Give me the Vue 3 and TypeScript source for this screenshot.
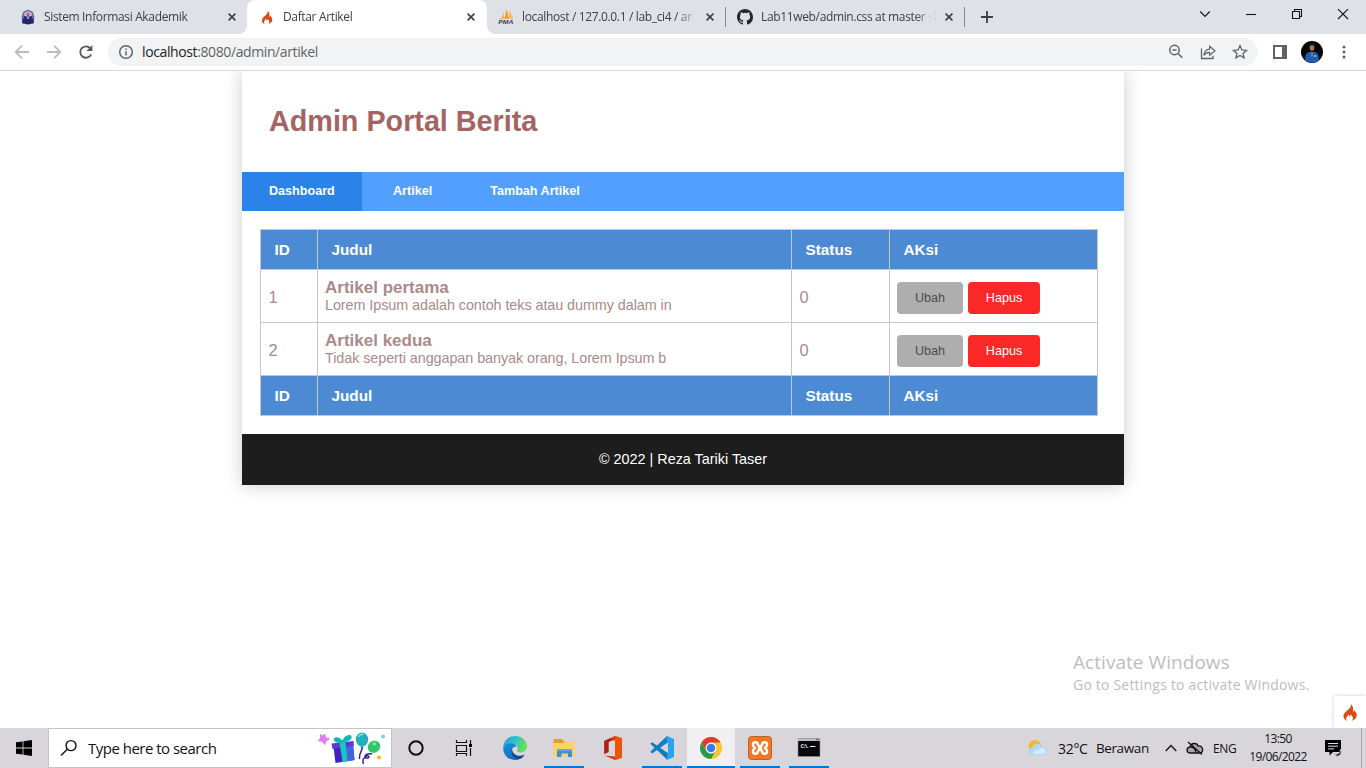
<script setup lang="ts">
interface Tab {
  title: string
  icon: 'campus' | 'flame' | 'pma' | 'github'
  active?: boolean
  divider?: boolean
}
interface Article {
  id: number
  title: string
  excerpt: string
  status: number
}

const tabs: Tab[] = [
  { title: 'Sistem Informasi Akademik', icon: 'campus' },
  { title: 'Daftar Artikel', icon: 'flame', active: true },
  { title: 'localhost / 127.0.0.1 / lab_ci4 / ar', icon: 'pma', divider: true },
  { title: 'Lab11web/admin.css at master · l', icon: 'github', divider: true },
]
const columns: string[] = ['ID', 'Judul', 'Status', 'AKsi']
const articles: Article[] = [
  { id: 1, title: 'Artikel pertama', excerpt: 'Lorem Ipsum adalah contoh teks atau dummy dalam in', status: 0 },
  { id: 2, title: 'Artikel kedua', excerpt: 'Tidak seperti anggapan banyak orang, Lorem Ipsum b', status: 0 },
]
const flame =
  'M8.6 0.5C9.3 2.4 8.4 3.7 6.8 5.2C4.6 7.2 2.2 8.8 2.2 11.4C2.2 13.3 3.6 14.9 5.6 15.5C4.6 14.6 4.3 13.5 4.9 12.4C5.4 11.5 6.3 10.9 6.2 9.6C7.1 10 7.5 10.8 7.3 11.7C8.1 11.3 8.3 10.4 8.1 9.7C9.5 10.6 10.9 11.7 10.7 13.3C10.6 14.2 10.1 14.9 9.4 15.5C11.9 14.9 14 13 14 10.5C14 8.2 12.5 6.9 11.7 6C11.6 6.8 11.3 7.3 10.7 7.5C11 4.8 10.9 2.2 8.6 0.5Z'
</script>

<template>
  <div class="screen">
    <div class="tabstrip">
      <div v-for="tab in tabs" :key="tab.title" class="tab" :class="{ active: tab.active, divider: tab.divider }">
        <svg v-if="tab.icon === 'campus'" class="favicon" viewBox="0 0 16 16">
          <path d="M8 0.5L12.8 2.7L14.5 8L13.5 12H2.5L1.5 8L3.2 2.7Z" fill="#6b6fab" />
          <path d="M8 2L11.6 4L12.7 8L11.4 11H4.6L3.3 8L4.4 4Z" fill="#b4b8da" />
          <path d="M8 3.2L9.3 5.2L8.6 8H7.4L6.7 5.2Z" fill="#e0453c" />
          <path d="M3.5 6.5L7.2 7.8V11H3.5ZM12.5 6.5L8.8 7.8V11H12.5Z" fill="#292f78" />
          <path d="M2.4 10H13.6L14 14.2L8 15.5L2 14.2Z" fill="#22276b" />
        </svg>
        <svg v-else-if="tab.icon === 'flame'" class="favicon" viewBox="-1 -1.5 18 18">
          <path :d="flame" fill="#dd4814" />
        </svg>
        <svg v-else-if="tab.icon === 'pma'" class="favicon" viewBox="0 0 16 16">
          <path d="M5.7 1.5C5.8 5 4.2 8 1.4 10.5L6.2 9.6Z" fill="#f9b05c" />
          <path d="M7.8 0C8.2 3.5 7.6 7 6.2 10L11 9.5C10.5 6 9.6 2.5 7.8 0Z" fill="#f89c0e" />
          <path d="M11 1.8C11.3 4.5 11.5 7 11.2 9.7L15.4 10C14.5 7 13 4 11 1.8Z" fill="#fbb461" />
          <text class="pma" x="0.2" y="15.4" textLength="15.3" lengthAdjust="spacingAndGlyphs">PMA</text>
        </svg>
        <svg v-else class="favicon" viewBox="0 0 16 16">
          <path fill="#24292f" d="M8 0C3.58 0 0 3.58 0 8c0 3.54 2.29 6.53 5.47 7.59.4.07.55-.17.55-.38 0-.19-.01-.82-.01-1.49-2.01.37-2.53-.49-2.69-.94-.09-.23-.48-.94-.82-1.13-.28-.15-.68-.52-.01-.53.63-.01 1.08.58 1.23.82.72 1.21 1.87.87 2.33.66.07-.52.28-.87.51-1.07-1.78-.2-3.64-.89-3.64-3.95 0-.87.31-1.59.82-2.15-.08-.2-.36-1.02.08-2.12 0 0 .67-.21 2.2.82a7.6 7.6 0 0 1 4 0c1.53-1.04 2.2-.82 2.2-.82.44 1.1.16 1.92.08 2.12.51.56.82 1.27.82 2.15 0 3.07-1.87 3.75-3.65 3.95.29.25.54.73.54 1.48 0 1.07-.01 1.93-.01 2.2 0 .21.15.46.55.38A8.01 8.01 0 0 0 16 8c0-4.42-3.58-8-8-8Z" />
        </svg>
        <span class="tab-title">{{ tab.title }}</span>
        <svg class="tab-close" viewBox="0 0 8 8"><path d="M0.6 0.6L7.4 7.4M7.4 0.6L0.6 7.4" /></svg>
      </div>
      <svg class="new-tab" viewBox="0 0 12 12"><path d="M6 0V12M0 6H12" /></svg>
      <div class="window-buttons">
        <svg viewBox="0 0 46 28"><path d="M18.2 11.5L23 16.5L27.8 11.5" /></svg>
        <svg viewBox="0 0 46 28"><path d="M18 14.5H28" /></svg>
        <svg viewBox="0 0 46 28"><path d="M18.5 11.5H25.5V18.5H18.5ZM20.5 11.5V9.5H27.5V16.5H25.5" /></svg>
        <svg viewBox="0 0 46 28"><path d="M18 9.2L28 19M28 9.2L18 19" /></svg>
      </div>
    </div>

    <div class="toolbar">
      <svg class="nav-icon" viewBox="0 0 16 16"><path d="M15 8H2M8 1.7L1.7 8L8 14.3" stroke="#babcbe" /></svg>
      <svg class="nav-icon" viewBox="0 0 16 16"><path d="M1 8H14M8 1.7L14.3 8L8 14.3" stroke="#babcbe" /></svg>
      <svg class="nav-icon" viewBox="0 0 16 16">
        <path d="M13.2 10.3A5.7 5.7 0 1 1 12.2 4.2" stroke="#55585c" stroke-width="2" />
        <path class="solid" d="M14.4 1V7H8.4Z" />
      </svg>
      <div class="omnibox">
        <svg class="info" viewBox="0 0 16 16">
          <circle cx="8" cy="8" r="6.3" /><path d="M8 7.2V11.4M8 4.4V6" />
        </svg>
        <span class="url"><b>localhost</b>:8080/admin/artikel</span>
        <svg class="omni-icon" viewBox="0 0 16 16"><circle cx="6.5" cy="6" r="4.7" /><path d="M10 9.5L14.3 13.8M4.4 6H8.6" /></svg>
        <svg class="omni-icon" viewBox="0 0 16 16">
          <path d="M1.5 4.5V14.5H13V11.8" stroke-width="1.3" />
          <path d="M3.8 11.3C4.3 7.8 6.4 5.5 9.6 5.2V2.2L15 6.8L9.6 11.2V8.3C7.2 8.3 5.3 9.2 3.8 11.3Z" stroke-width="1.2" />
        </svg>
        <svg class="omni-icon" viewBox="0 0 16 16"><path d="M8 1.7L9.9 6L14.5 6.4L11 9.4L12.1 13.9L8 11.5L3.9 13.9L5 9.4L1.5 6.4L6.1 6Z" stroke-width="1.3" /></svg>
      </div>
      <svg class="side-panel" viewBox="0 0 14 14"><path d="M1 1H13V13H1Z" fill="#fff" stroke="#5f6368" stroke-width="2" /><path d="M9 0H14V14H9Z" fill="#5f6368" /></svg>
      <svg class="avatar" viewBox="0 0 22 22">
        <circle cx="11" cy="11" r="11" fill="#050606" />
        <path d="M4.2 19.5C3.8 15 4.7 11.8 8 10.9H14C17.3 11.8 18.2 15 17.8 19.5A11 11 0 0 1 4.2 19.5Z" fill="#1b5cb5" />
        <ellipse cx="11" cy="6.5" rx="2.3" ry="3.3" fill="#a37b52" />
        <path d="M8.3 5.4C8.4 1.8 13.6 1.8 13.7 5.4C12 4.2 10 4.2 8.3 5.4Z" fill="#3a2a1c" />
        <path d="M10 10L11 12L12 10V15.5H10Z" fill="#8d7565" />
        <path d="M13 15H15.3" stroke="#dae5f2" />
      </svg>
      <svg class="kebab" viewBox="0 0 4 16"><circle cx="2" cy="3" r="1.5" /><circle cx="2" cy="8" r="1.5" /><circle cx="2" cy="13" r="1.5" /></svg>
    </div>

    <div class="viewport">
      <div class="container">
        <header><h1>Admin Portal Berita</h1></header>
        <nav>
          <a class="current">Dashboard</a>
          <a>Artikel</a>
          <a>Tambah Artikel</a>
        </nav>
        <main>
          <table>
            <colgroup><col class="c-id" /><col class="c-title" /><col class="c-status" /><col class="c-action" /></colgroup>
            <thead>
              <tr><th v-for="c in columns" :key="c">{{ c }}</th></tr>
            </thead>
            <tbody>
              <tr v-for="a in articles" :key="a.id">
                <td class="num">{{ a.id }}</td>
                <td><strong>{{ a.title }}</strong><p>{{ a.excerpt }}</p></td>
                <td class="num">{{ a.status }}</td>
                <td>
                  <div class="actions"><a class="btn">Ubah</a><a class="btn danger">Hapus</a></div>
                </td>
              </tr>
            </tbody>
            <tfoot>
              <tr><th v-for="c in columns" :key="c">{{ c }}</th></tr>
            </tfoot>
          </table>
        </main>
        <footer>© 2022 | Reza Tariki Taser</footer>
      </div>
      <div class="watermark">
        <div class="wm-title">Activate Windows</div>
        <div class="wm-text">Go to Settings to activate Windows.</div>
      </div>
      <div class="debug-toggle"><svg viewBox="0 0 16 16"><path :d="flame" fill="#dd4814" /></svg></div>
    </div>

    <div class="taskbar">
      <div class="start">
        <svg viewBox="0 0 16 16"><path d="M0 2.3L6.6 1.4V7.5H0ZM7.4 1.3L16 0V7.5H7.4ZM0 8.4H6.6V14.6L0 13.7ZM7.4 8.4H16V16L7.4 14.8Z" /></svg>
      </div>
      <div class="search">
        <svg class="lens" viewBox="0 0 18 18"><circle cx="11" cy="6.6" r="5" /><path d="M7.3 10.3L1 16.5" /></svg>
        <span>Type here to search</span>
        <svg class="party" viewBox="0 0 70 34">
          <path d="M7.5 3L8.6 6.6L12.3 8L9 9.8L7.8 13.6L5.2 10.3L1.2 9.8L3.8 7L3.2 3.6L6.2 5.2Z" fill="#e57af4" stroke="#e57af4" stroke-linejoin="round" />
          <path d="M16.5 16L36 13.500L37.5 29L18.500 32Z" fill="#4420c4" />
          <path d="M27 15L36 13.500L37.5 29L29 30.500Z" fill="#3f65df" />
          <path d="M14.500 12.500L36.500 10L37 15L15.500 18Z" fill="#5a3bd8" />
          <path d="M22.500 11.700L28.500 11L30.500 30.200L25.500 31Z" fill="#18c6c2" />
          <path d="M25.500 11.500C20 13 15.500 10 17 7.500C19 4.500 23.500 7 25.500 9.500C27 5.500 31 3 34 4.500C36.500 7.500 32 11 25.500 11.500Z" fill="#13b5b5" />
          <path d="M45 16C46 20 42 20 42.500 28M55 23C51 22 46 24 49 27C53 28 53 23 48 26C44 30 47 31 46 33" fill="none" stroke="#38208f" stroke-width="1.500" />
          <ellipse cx="45" cy="8.500" rx="6.200" ry="7" fill="#25aebd" />
          <path d="M45 14.500L43.300 17H46.700Z" fill="#158b9c" />
          <path d="M41.500 6C42.500 4 44.500 3 46.500 3.400" stroke="#80e1e5" stroke-width="1.500" fill="none" />
          <ellipse cx="57" cy="15.800" rx="6.600" ry="5.800" transform="rotate(-35 57 15.800)" fill="#2fc76b" />
          <circle cx="57.500" cy="13" r="1.700" fill="#7be69a" />
          <circle cx="66" cy="5.500" r="2" fill="#6cd6e5" /><circle cx="62" cy="26.500" r="2" fill="#fdb515" />
        </svg>
      </div>
      <div class="apps">
        <div class="app"><svg viewBox="0 0 24 24"><circle cx="12" cy="12" r="6.7" fill="none" stroke="#111" stroke-width="2" /></svg></div>
        <div class="app taskview"><svg viewBox="0 0 24 24"><path d="M4.500 4V6.500H14.500V4M4.500 9.500H14.500V15.500H4.500ZM4.500 20V17.500H14.500V20M18.500 4V8M18.500 12V20" fill="none" stroke="#111" stroke-width="1.200" /><path d="M17 8H20V11H17Z" /></svg></div>
        <div class="app edge">
          <svg viewBox="0 0 24 24">
            <defs>
              <linearGradient id="edgeTop" x1="0" y1="0" x2="1" y2="0.300"><stop offset="0" stop-color="#239fd6" /><stop offset="0.500" stop-color="#2cbfd2" /><stop offset="1" stop-color="#66e052" /></linearGradient>
              <linearGradient id="edgeSwirl" x1="0" y1="0" x2="0.600" y2="1"><stop offset="0" stop-color="#1b8fd9" /><stop offset="1" stop-color="#1269bd" /></linearGradient>
            </defs>
            <path d="M0.300 11C0.800 5 5.500 0 12 0C19 0 24 5 24 10.300C24 14.300 21 16.500 17.500 16.500C14.500 16.500 13.300 15.300 14.200 14C15.500 12 14.500 8.700 10.700 8C6 7 2 8.500 0.300 11Z" fill="url(#edgeTop)" />
            <path d="M0.200 11.800C1.500 8 6 6.500 9.800 7.600C12 8.200 13.500 9.700 13.400 11C11 10 9 12 9 14.500C9 19 14 22 20 19.500L21.600 18.600C19 22.500 15.500 24 12 24C5 24 0 18.500 0.200 11.800Z" fill="url(#edgeSwirl)" />
            <path d="M9 13C7.500 17 10.500 23.300 15 23.500C18 22.700 20.500 21 21.700 18.700C16 21.500 9.500 19 9 13Z" fill="#12498b" />
          </svg>
        </div>
        <div class="app open explorer">
          <svg viewBox="0 0 24 24">
            <path d="M1.500 3H9.500L11.500 5H22V10H1.500Z" fill="#dda121" /><path d="M1.500 7H11L13 5H22.500V20.500H1.500Z" fill="#fbd462" />
            <path d="M5 13H20V21H16V17.500H9.500V21H5Z" fill="#3c91d5" /><path d="M5 13H20V15H5Z" fill="#59aae5" />
          </svg>
        </div>
        <div class="app office">
          <svg viewBox="0 0 24 24">
            <path d="M14 0L21 2.200V21.800L14 24L3.500 19.500L14 20.500V4L7.500 5.800V16L3.300 18V5Z" fill="#d53b0a" />
            <path d="M14 0L21 2.200V21.800L14 24Z" fill="#ee5308" /><path d="M3.300 5L9.500 2V5.300L7.500 5.800V16L3.300 18Z" fill="#af1d1a" />
          </svg>
        </div>
        <div class="app open code">
          <svg viewBox="0 0 24 24">
            <path d="M2.200 6.200L0.300 7.800L17 23.500L18 17.200Z" fill="#0f79bd" /><path d="M0.300 15.800L2.200 17.500L18 6.200L17 0Z" fill="#137fc6" />
            <path d="M17 0L24 3V21L17 24L16.500 23L18 17.500V6.500L16.500 1Z" fill="#27a4ec" />
          </svg>
        </div>
        <div class="app open focused">
          <svg viewBox="0 0 24 24">
            <circle cx="12" cy="12" r="11" fill="#f9c629" />
            <path d="M2.500 6.500A11 11 0 0 1 21.500 6.500H12L7.300 14.700Z" fill="#e33b2e" />
            <path d="M2.500 6.500L7.300 14.700L12 17.500L16.700 14.700L12 23A11 11 0 0 1 2.500 6.500Z" fill="#259b4b" />
            <circle cx="12" cy="12" r="5.500" fill="#fff" /><circle cx="12" cy="12" r="4.300" fill="#3a7be9" />
          </svg>
        </div>
        <div class="app open xampp">
          <svg viewBox="0 0 24 24">
            <rect x="0.500" y="0.500" width="23" height="23" rx="3" fill="#f37623" stroke="#b9632f" />
            <path d="M9.800 9.300V8.300C9.800 5.500 5 5.500 5 8.500C5 10.500 5.800 11.300 7 12C5.800 12.700 5 13.500 5 15.500C5 18.500 9.800 18.500 9.800 15.700V14.700M14.200 9.300V8.300C14.200 5.500 19 5.500 19 8.500C19 10.500 18.200 11.300 17 12C18.200 12.700 19 13.500 19 15.500C19 18.500 14.200 18.500 14.200 15.700V14.700M9.800 9.300C10.500 10.300 13.500 10.300 14.200 9.300M9.800 14.700C10.500 13.700 13.500 13.700 14.200 14.700M10 12H14" fill="none" stroke="#fff" stroke-width="2.500" stroke-linejoin="round" />
          </svg>
        </div>
        <div class="app open cmd">
          <svg viewBox="0 0 24 24"><path d="M1 2.500H23V20.500H1Z" fill="#090909" stroke="#8b9094" stroke-width="0.600" /><path d="M1 2.500H23V5H1Z" fill="#bbc0c4" /><path d="M19 3.700H22" stroke="#555" /><text x="3.500" y="11.500" font-size="5.500" font-weight="bold" fill="#eee" textLength="8">C:\.</text><path d="M13 10.500H18.500" stroke="#eee" /></svg>
        </div>
      </div>
      <div class="tray">
        <svg class="weather" viewBox="0 0 22 18"><circle cx="8" cy="7.500" r="6.500" fill="#f6b72c" /><path d="M5 16C-0.500 16 0 9.500 5 9C6 4 13 3 15 7.500C21 6.500 22.500 15.500 17 16Z" fill="#acd9f7" /><path d="M7 15C5 13 8 10 11 12C13 7 18 8 18.500 12C20 14 17 15 16 15Z" fill="#d3ecfb" /></svg>
        <span class="temp">32°C</span><span class="sky">Berawan</span>
        <svg class="chevron" viewBox="0 0 12 8"><path d="M0.700 7L6 1.500L11.300 7" /></svg>
        <svg class="cloud" viewBox="0 0 18 14"><path class="cloud-body" d="M4.500 12C0 12 0 6.500 4 6C5 1.500 11 1.500 12 5C17.500 4.500 18 12 14 12Z" /><path d="M4.500 6C7.500 6 9.500 8 10 12M2 1L16 13.500" /></svg>
        <span class="lang">ENG</span>
        <div class="clock"><span>13:50</span><span>19/06/2022</span></div>
        <svg class="notif" viewBox="0 0 17 17"><path d="M0 0H16V12H8L4.500 15.500V12H0Z" /><path d="M3 3.500H13M3 6.200H13M3 8.900H9" stroke="#e0dde1" /><path d="M11 16A4.200 4.200 0 0 0 15.500 9.500A4.700 4.700 0 0 1 9 13.800Z" fill="#111" stroke="#d9d6db" stroke-width="0.900" /></svg>
        <i class="peek"></i>
      </div>
    </div>
  </div>
</template>

<style>
html,
body {
  margin: 0;
  overflow: hidden;
}
</style>

<style scoped>
* {
  box-sizing: border-box;
}
.screen {
  width: 1366px;
  height: 768px;
  display: flex;
  flex-direction: column;
  background: #fff;
  overflow: hidden;
  font-family: 'Open Sans', 'Noto Sans', sans-serif;
}
svg {
  display: block;
  flex: none;
}

/* Browser chrome */
.tabstrip {
  flex: none;
  height: 34px;
  display: flex;
  background: #dee1e6;
  padding-left: 8px;
}
.tab {
  position: relative;
  width: 239px;
  height: 34px;
  display: flex;
  align-items: center;
  padding: 0 11px 0 12px;
}
.tab.active {
  width: 240px;
  margin-right: -1px;
  padding-right: 12px;
  background: #fff;
  border-radius: 8px 8px 0 0;
}
.tab.active::before,
.tab.active::after {
  content: '';
  position: absolute;
  bottom: 0;
  width: 8px;
  height: 8px;
}
.tab.active::before {
  left: -8px;
  background: radial-gradient(circle at 0 0, transparent 7.5px, #fff 8px);
}
.tab.active::after {
  right: -8px;
  background: radial-gradient(circle at 100% 0, transparent 7.5px, #fff 8px);
}
.tab.divider::after {
  content: '';
  position: absolute;
  right: -1px;
  top: 7px;
  width: 1px;
  height: 20px;
  background: #85888d;
}
.favicon {
  width: 16px;
  height: 16px;
  margin-right: 8px;
  overflow: visible;
}
.pma {
  fill: #3b3c64;
  font: italic bold 5.5px 'Liberation Sans', Arial, sans-serif;
}
.tab-title {
  width: 175px;
  white-space: nowrap;
  font-size: 12px;
  line-height: 18px;
  letter-spacing: -0.35px;
  color: #3c4043;
  mask-image: linear-gradient(90deg, #000 154px, transparent 176px);
}
.tab-close {
  width: 8px;
  height: 8px;
  margin-left: 9px;
}
.tab-close path {
  fill: none;
  stroke: #3c4043;
  stroke-width: 1.6;
}
.new-tab {
  width: 12px;
  height: 12px;
  margin: 11px 0 0 17px;
}
.new-tab path {
  stroke: #3c4043;
  stroke-width: 1.8;
}
.window-buttons {
  display: flex;
  margin-left: auto;
}
.window-buttons svg {
  width: 46px;
  height: 28px;
}
.window-buttons path {
  fill: none;
  stroke: #151515;
  stroke-width: 1.1;
}
.toolbar {
  flex: none;
  height: 37px;
  display: flex;
  align-items: center;
  padding: 0 20px 0 14px;
  border-bottom: 1px solid #d7d8da;
}
.nav-icon {
  width: 16px;
  height: 16px;
  margin-right: 16px;
}
.nav-icon path {
  fill: none;
  stroke-width: 1.8;
}
.nav-icon .solid {
  fill: #55585c;
}
.omnibox {
  width: 1150px;
  height: 28px;
  margin-left: -2px;
  padding: 0 10px;
  display: flex;
  align-items: center;
  gap: 16px;
  border-radius: 14px;
  background: #f1f3f4;
}
.info {
  width: 16px;
  height: 16px;
}
.info,
.omni-icon {
  fill: none;
  stroke: #5f6368;
  stroke-width: 1.5;
}
.omni-icon {
  width: 16px;
  height: 16px;
}
.url {
  flex: 1;
  margin-left: -8px;
  font-size: 14px;
  line-height: 20px;
  letter-spacing: -0.39px;
  color: #5f6368;
}
.url b {
  font-weight: 400;
  color: #202124;
}
.side-panel {
  width: 14px;
  height: 14px;
  margin-left: 15px;
}
.avatar {
  width: 22px;
  height: 22px;
  margin-left: 14px;
}
.kebab {
  width: 4px;
  height: 16px;
  margin-left: auto;
  fill: #5f6368;
}

/* Page */
.viewport {
  position: relative;
  flex: 1;
  overflow: hidden;
  font-family: 'Liberation Sans', Arial, sans-serif;
}
.container {
  width: 882px;
  margin: 0 auto;
  background: #fff;
  box-shadow: 0 0 18px rgba(0, 0, 0, 0.2);
}
header {
  height: 101px;
  padding: 33px 27px 0;
}
h1 {
  margin: 0;
  font-size: 28.8px;
  line-height: 34px;
  letter-spacing: -0.03px;
  color: #a56464;
}
nav {
  height: 39px;
  display: flex;
  gap: 4px;
  background: #529fff;
  font-size: 12.6px;
  font-weight: 700;
  line-height: 38px;
}
nav a {
  height: 39px;
  padding: 0 27px;
  color: #fff;
}
nav .current {
  width: 120px;
  background: #2b83ea;
}
main {
  padding: 18px 26px 18px 18px;
}
table {
  width: 838px;
  table-layout: fixed;
  border-collapse: collapse;
  color: #aa8a8a;
}
.c-id {
  width: 57px;
}
.c-title {
  width: 474px;
}
.c-status {
  width: 98px;
}
.c-action {
  width: 208px;
}
th,
td {
  border: 1px solid #c6c6c6;
  text-align: left;
}
th {
  height: 40px;
  padding: 0 13.5px;
  background: #4c8bd4;
  color: #fff;
  font-size: 15.3px;
}
td {
  height: 53px;
  padding: 0 7px;
  font-size: 17px;
  line-height: 18px;
}
td.num {
  padding: 1px 7.5px 0;
  font-size: 16.5px;
}
td strong {
  display: block;
  padding-top: 1px;
}
p {
  margin: 0;
  font-size: 14.4px;
  line-height: 17px;
  letter-spacing: -0.075px;
}
.actions {
  display: flex;
  gap: 5px;
  padding-top: 4px;
}
.btn {
  width: 66px;
  height: 32px;
  border-radius: 4px;
  background: #aeaeae;
  color: #4c4c4c;
  font-size: 12.6px;
  line-height: 32px;
  text-align: center;
}
.btn.danger {
  width: 72px;
  background: #fb2828;
  color: #fff;
}
footer {
  height: 51px;
  background: #1d1d1d;
  color: #fff;
  font-size: 14.4px;
  line-height: 51px;
  text-align: center;
}
.watermark {
  position: absolute;
  left: 1073px;
  top: 578px;
  font-family: 'Open Sans', 'Noto Sans', sans-serif;
  color: #bdbdbd;
  white-space: nowrap;
}
.wm-title {
  font-size: 19px;
  line-height: 26px;
  letter-spacing: 0.05px;
}
.wm-text {
  font-size: 14px;
  line-height: 20px;
  letter-spacing: 0.2px;
}
.debug-toggle {
  position: absolute;
  right: 0;
  bottom: 0;
  width: 32px;
  height: 32px;
  padding: 7px 7px;
  background: #fff;
  box-shadow: 0 0 4px rgba(0, 0, 0, 0.2);
}
.debug-toggle svg {
  width: 18px;
  height: 19px;
}

/* Taskbar */
.taskbar {
  flex: none;
  height: 40px;
  display: flex;
  background: #d9d6db;
  color: #111;
}
.start {
  width: 48px;
  padding: 12px 16px;
}
.start svg {
  width: 16px;
  height: 16px;
}
.search {
  width: 344px;
  height: 40px;
  display: flex;
  align-items: center;
  padding: 0 4px 0 11px;
  border: 1px solid #c5c3c7;
  background: #fff;
  font-size: 15px;
  letter-spacing: -0.51px;
}
.lens {
  width: 18px;
  height: 18px;
  margin-right: 10px;
}
.lens * {
  fill: none;
  stroke: #111;
  stroke-width: 1.4;
}
.party {
  width: 70px;
  height: 34px;
  margin-left: auto;
}
.apps {
  display: flex;
  gap: 1px;
}
.app {
  position: relative;
  width: 48px;
  height: 40px;
  display: flex;
  align-items: center;
  justify-content: center;
}
.app svg {
  width: 24px;
  height: 24px;
}
.taskview {
  padding-right: 2px;
}
.app.edge,
.app.explorer,
.app.office,
.app.code,
.app.xampp,
.app.cmd {
  padding-left: 2px;
}
.app.open::after {
  content: '';
  position: absolute;
  left: 5px;
  right: 3px;
  bottom: 0;
  height: 2px;
  background: #0078d7;
}
.app.focused {
  width: 48px;
  margin-left: 1px;
  margin-right: -1px;
  background: #f1eff2;
}
.app.focused::after {
  left: 0;
  right: 0;
}
.tray {
  flex: 1;
  display: flex;
  align-items: center;
  padding-left: 195px;
  white-space: nowrap;
}
.weather {
  width: 22px;
  height: 18px;
}
.temp,
.sky {
  font-size: 14px;
  letter-spacing: -0.3px;
}
.temp {
  width: 38px;
  margin-left: 9px;
}
.sky {
  width: 69px;
  font-size: 13.5px;
  letter-spacing: -0.4px;
}
.chevron {
  width: 12px;
  height: 8px;
}
.chevron path,
.cloud path {
  fill: none;
  stroke: #111;
  stroke-width: 1.3;
}
.cloud {
  width: 18px;
  height: 14px;
  margin-left: 9px;
}
.cloud .cloud-body {
  fill: #aaa8ac;
}
.lang {
  width: 28px;
  margin-left: 9px;
  font-size: 12px;
  letter-spacing: -0.3px;
}
.clock {
  width: 74px;
  display: flex;
  flex-direction: column;
  align-items: center;
  font-size: 12px;
  line-height: 18px;
  letter-spacing: -0.6px;
}
.notif {
  width: 17px;
  height: 17px;
  margin-left: 10px;
}
.peek {
  width: 1px;
  height: 40px;
  margin: 0 4px 0 auto;
  background: #aaa8ac;
}
</style>
